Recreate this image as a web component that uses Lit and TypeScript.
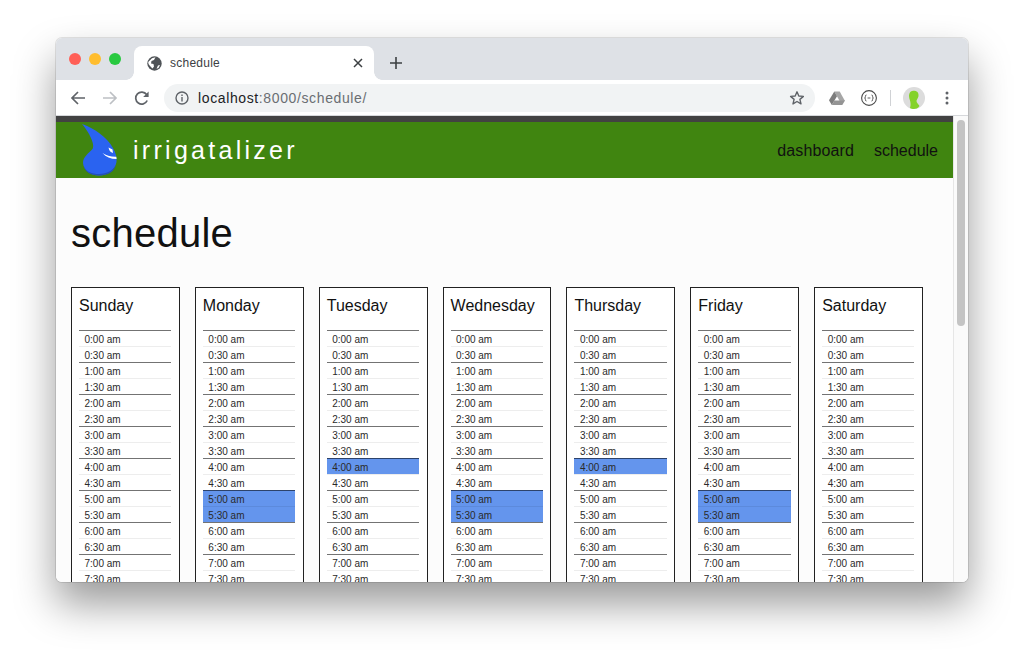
import { LitElement, html, css, svg } from "lit";
import { customElement } from "lit/decorators.js";
import { classMap } from "lit/directives/class-map.js";

const DAYS: [string, number[]][] = [
  ["Sunday", []],
  ["Monday", [10, 11]],
  ["Tuesday", [8]],
  ["Wednesday", [10, 11]],
  ["Thursday", [8]],
  ["Friday", [10, 11]],
  ["Saturday", []],
];
const SLOTS = Array.from({ length: 24 }, (_, i) => `${Math.floor(i / 2)}:${i % 2 ? "30" : "00"} am`);

@customElement("app-root")
export class AppRoot extends LitElement {
  static styles = css`
    :host { display: block; width: 1024px; height: 656px; overflow: hidden; background: #fff; font-family: "Liberation Sans", Arial, sans-serif; }
    .stage { padding: 38px 56px; height: 656px; box-sizing: border-box; }
    .window { width: 912px; height: 544px; border-radius: 6px; overflow: hidden; display: flex; flex-direction: column; background: #fff; box-shadow: 0 0 0 1px rgba(0,0,0,.1), 0 22px 42px 0 rgba(0,0,0,.4); }
    .titlebar { height: 42px; flex: none; background: #dee1e6; display: flex; align-items: flex-end; box-sizing: border-box; }
    .lights { display: flex; gap: 8px; padding: 0 13px 15px 13px; align-self: flex-end; }
    .light { width: 12px; height: 12px; border-radius: 50%; }
    .red { background: #ff5f57; } .yellow { background: #ffbd2e; } .green { background: #28c940; }
    .tab { position: relative; width: 240px; height: 34px; background: #fff; border-radius: 8px 8px 0 0; display: flex; align-items: center; padding: 0 10px 0 13px; box-sizing: border-box; font-size: 12px; color: #3c4043; gap: 8px; }
    .tab::before, .tab::after { content: ""; position: absolute; bottom: 0; width: 8px; height: 8px; }
    .tab::before { left: -8px; background: radial-gradient(circle at 0 0, transparent 7.5px, #fff 8px); }
    .tab::after { right: -8px; background: radial-gradient(circle at 100% 0, transparent 7.5px, #fff 8px); }
    .tab span { flex: 1; letter-spacing: .25px; }
    .plus { margin-left: 15px; margin-bottom: 10px; display: block; }
    .toolbar { height: 36px; flex: none; display: flex; align-items: center; background: #fff; box-sizing: border-box; border-bottom: 1px solid #d6d8db; padding-left: 14px; }
    .nav-icons { display: flex; gap: 16px; align-items: center; }
    .omni { width: 651px; height: 28px; margin-left: 14px; margin-right: 14px; border-radius: 14px; background: #f1f3f4; display: flex; align-items: center; padding: 0 10px 0 10px; box-sizing: border-box; gap: 8px; font-size: 14px; color: #6a6e72; letter-spacing: .62px; }
    .omni b { font-weight: 400; color: #202124; }
    .omni .url { flex: 1; }
    .exts { display: flex; align-items: center; }
    .sep { width: 1px; height: 16px; background: #d0d2d5; margin: 0 12px 0 13px; }
    .page { flex: 1; min-height: 0; display: flex; background: #fcfcfc; }
    .content { flex: 1; min-width: 0; overflow: hidden; }
    .scrollbar { width: 15px; flex: none; background: #fafafa; border-left: 1px solid #e6e6e6; box-sizing: border-box; padding: 4px 3px 0 3px; }
    .thumb { height: 206px; border-radius: 4px; background: #c4c4c4; }
    .strip { height: 6px; background: #424242; }
    header { height: 56px; background: #408510; display: flex; align-items: center; padding: 0 15px 0 24px; }
    .brand { font-size: 25px; letter-spacing: 3.28px; color: #fff; margin: 1px 0 0 13px; flex: 1; }
    nav { display: flex; gap: 20px; font-size: 16px; color: #111; margin-top: 2px; }
    nav span:first-child { letter-spacing: .12px; }
    main { padding: 32px 15px 0; }
    h1 { margin: 0; font-size: 40px; font-weight: 400; line-height: 46px; color: #111; letter-spacing: .25px; }
    .week { display: grid; grid-template-columns: repeat(7, 1fr); column-gap: 15px; width: 852px; margin-top: 31px; }
    .day { border: 1px solid #222; padding: 8px 7.6px 8px 7px; background: #fff; }
    h2 { margin: 0 0 14px; font-size: 16px; font-weight: 400; line-height: 20px; color: #111; }
    .slot { height: 16px; box-sizing: border-box; border-top: 1px solid rgba(0,0,0,.07); font-size: 10px; line-height: 17px; padding-left: 5.5px; color: #2a2a2a; }
    .slot.hour { border-top-color: rgba(0,0,0,.55); }
    .slot.on { background: #6495ed; }
  `;

  private icon(w: number, h: number, body: unknown) {
    return html`<svg width=${w} height=${h} viewBox="0 0 ${w} ${h}" style="display:block;flex:none">${body}</svg>`;
  }

  render() {
    return html`<div class="stage"><div class="window">
      <div class="titlebar">
        <div class="lights"><div class="light red"></div><div class="light yellow"></div><div class="light green"></div></div>
        <div class="tab">
          ${this.icon(15, 15, svg`<circle cx="7.5" cy="7.5" r="7.2" fill="#4f5357"/><path d="M1.2 6 L5 2.2 L8.5 1.2 L7 4 L4.5 5 L4 7.5 L6.5 8 L7 10.5 L5.5 12.5 L3 10 L1.5 8 Z" fill="#fff"/><path d="M11 9.5 L13 9 L11.5 12 L9.5 12.8 Z" fill="#fff"/>`)}
          <span>schedule</span>
          ${this.icon(12, 12, svg`<path d="M2 2 L10 10 M10 2 L2 10" stroke="#3c4043" stroke-width="1.5" fill="none"/>`)}
        </div>
        <svg class="plus" width="14" height="14" viewBox="0 0 14 14"><path d="M7 1 V13 M1 7 H13" stroke="#3c4043" stroke-width="1.6" fill="none"/></svg>
      </div>
      <div class="toolbar">
        <div class="nav-icons">
          ${this.icon(16, 16, svg`<path d="M15 8 H2 M8 2 L2 8 L8 14" stroke="#5f6368" stroke-width="1.7" fill="none"/>`)}
          ${this.icon(16, 16, svg`<path d="M1 8 H14 M8 2 L14 8 L8 14" stroke="#bdc0c4" stroke-width="1.7" fill="none"/>`)}
          ${this.icon(16, 16, svg`<path d="M13.2 10.5 A6 6 0 1 1 12.6 4.6" stroke="#5f6368" stroke-width="1.7" fill="none"/><path d="M14.6 1.6 V7 H9.2 Z" fill="#5f6368"/>`)}
        </div>
        <div class="omni">
          ${this.icon(16, 16, svg`<circle cx="8" cy="8" r="6" stroke="#5f6368" stroke-width="1.4" fill="none"/><path d="M8 7 V11.5 M8 4.4 V5.9" stroke="#5f6368" stroke-width="1.4"/>`)}
          <span class="url"><b>localhost</b>:8000/schedule/</span>
          ${this.icon(16, 16, svg`<path d="M8 1.8 L9.8 6 L14.4 6.4 L10.9 9.4 L12 13.9 L8 11.5 L4 13.9 L5.1 9.4 L1.6 6.4 L6.2 6 Z" stroke="#5f6368" stroke-width="1.4" fill="none" stroke-linejoin="round"/>`)}
        </div>
        <div class="exts">
          <div style="width:32px">${this.icon(16, 14, svg`<path d="M5.3 0.5 H10.7 L16 10 H10.6 Z" fill="#a6a6a6"/><path d="M5.3 0.5 L8 5.2 L2.8 14 L0 9.3 Z" fill="#7d7d7d"/><path d="M2.8 14 L5.4 9.6 H16 L13.3 14 Z" fill="#949494"/>`)}</div>
          ${this.icon(16, 16, svg`<circle cx="8" cy="8" r="7.4" stroke="#4a4a4a" stroke-width="1.1" fill="#fff"/><path d="M5.5 5 Q4.2 5 4.4 6.5 Q4.5 8 3.6 8 Q4.5 8 4.4 9.5 Q4.2 11 5.5 11 M10.5 5 Q11.8 5 11.6 6.5 Q11.5 8 12.4 8 Q11.5 8 11.6 9.5 Q11.8 11 10.5 11 M6.6 8 H9.4" stroke="#4a4a4a" stroke-width=".9" fill="none"/>`)}
          <div class="sep"></div>
          ${this.icon(22, 22, svg`<circle cx="11" cy="11" r="11" fill="#dcdcdc"/><path d="M6 9 C6 4.5 9 3.5 11.5 3.7 C15 4 16 7 15.4 9.5 C15 11.5 13.5 12.5 13.5 14 C13.5 16 15.5 17 16.5 19 C15 21.4 12.5 22 11 22 C9.5 22 8 21.6 7 21 C8 18 7.5 15.5 7 13.5 C6.5 12 6 10.5 6 9 Z" fill="#84d22a"/>`)}
          <div style="margin-left:20px">${this.icon(4, 16, svg`<circle cx="2" cy="3" r="1.5" fill="#5f6368"/><circle cx="2" cy="8" r="1.5" fill="#5f6368"/><circle cx="2" cy="13" r="1.5" fill="#5f6368"/>`)}</div>
        </div>
      </div>
      <div class="page">
        <div class="content">
          <div class="strip"></div>
          <header>
            <svg width="40" height="56" viewBox="0 0 40 56" style="display:block;flex:none">
              <path d="M2 2 C14 6 27 15 33 26 C36 31 37 36 36.5 40 C35 48 28 53.5 19 53.5 C10 53.5 3.5 48 3 41 C2.8 35 9 31 12.5 27 C15.5 23 9 10 2 2 Z" fill="#2a63f0"/>
              <path d="M3.8 44 C6 50 12 52 19 52 C27 52 33 48.5 35.8 43 C34.5 49.5 28 53.5 19 53.5 C10 53.5 4.8 49.5 3.8 44 Z" fill="#2450b8"/>
              <path d="M28.5 25.5 L32.5 27.5 L33 31 C30.5 30.5 29 28.5 28.5 25.5 Z" fill="#fff"/>
              <path d="M22.5 31 C26 33.5 31 35 36.3 34.8 L36.6 37 C30.5 37 26 35 22.5 31 Z" fill="#fff"/>
            </svg>
            <div class="brand">irrigatalizer</div>
            <nav><span>dashboard</span><span>schedule</span></nav>
          </header>
          <main>
            <h1>schedule</h1>
            <div class="week">
              ${DAYS.map(([name, on]) => html`<div class="day">
                <h2>${name}</h2>
                ${SLOTS.map((s, i) => html`<div class=${classMap({ slot: true, hour: i % 2 === 0, on: on.includes(i) })}>${s}</div>`)}
              </div>`)}
            </div>
          </main>
        </div>
        <div class="scrollbar"><div class="thumb"></div></div>
      </div>
    </div></div>`;
  }
}
